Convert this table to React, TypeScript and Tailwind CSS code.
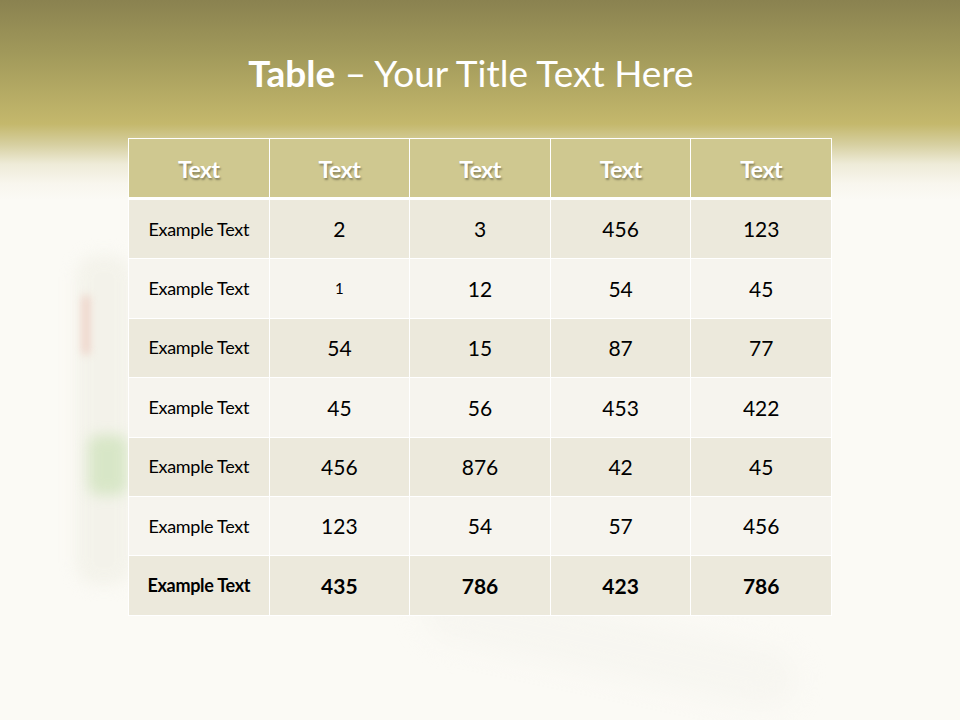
import React from "react";

const rows: { label: string; vals: string[]; bold?: boolean; small?: number[] }[] = [
  { label: "Example Text", vals: ["2", "3", "456", "123"] },
  { label: "Example Text", vals: ["1", "12", "54", "45"], small: [0] },
  { label: "Example Text", vals: ["54", "15", "87", "77"] },
  { label: "Example Text", vals: ["45", "56", "453", "422"] },
  { label: "Example Text", vals: ["456", "876", "42", "45"] },
  { label: "Example Text", vals: ["123", "54", "57", "456"] },
  { label: "Example Text", vals: ["435", "786", "423", "786"], bold: true },
];

export default function App() {
  return (
    <div
      className="relative w-[960px] h-[720px] overflow-hidden bg-[#fbfaf5]"
      style={{ fontFamily: "Lato, 'Liberation Sans', sans-serif" }}
    >
      <div className="absolute inset-x-0 top-0 h-[200px] bg-[linear-gradient(to_bottom,#8a8250_0%,#a49c5c_30%,#c4b86c_62%,#d6cf9f_72%,#eeebd8_82%,#f8f6ee_92%,#fbfaf5_100%)]" />
      {/* decorative blurred object */}
      <div className="absolute left-[76px] top-[255px] w-[56px] h-[330px] rounded-[20px] bg-[#f2f1e8] opacity-80 blur-[8px]" />
      <div className="absolute left-[82px] top-[295px] w-[8px] h-[60px] rounded-full bg-[#e9b0a2] opacity-50 blur-[4px]" />
      <div className="absolute left-[88px] top-[435px] w-[40px] h-[60px] rounded-[10px] bg-[#c6dfb0] opacity-60 blur-[7px]" />
      <div className="absolute left-[420px] top-[615px] w-[380px] h-[60px] rounded-full bg-[#f3f2ec] opacity-50 blur-[14px] rotate-[12deg]" />

      <div className="relative flex flex-col items-center">
        <h1 className="mt-[50px] h-[46px] pr-[18px] text-[37px] leading-[46px] text-white whitespace-nowrap">
          <span className="font-bold">Table</span> – Your Title Text Here
        </h1>

        <div className="mt-[42px] w-[704px] bg-white p-px flex flex-col">
          <div className="grid grid-cols-5 gap-px h-[58px]">
            {Array.from({ length: 5 }).map((_, i) => (
              <div
                key={i}
                className="bg-[#cfc890] flex items-center justify-center pt-[3px] text-white font-bold text-[23px] tracking-[-0.5px] [text-shadow:1px_2px_2px_rgba(0,0,0,0.35)]"
              >
                Text
              </div>
            ))}
          </div>
          <div className="h-[3px]" />
          <div className="flex flex-col gap-px">
            {rows.map((r, ri) => (
              <div key={ri} className="grid grid-cols-5 gap-px h-[58.4px]">
                <div
                  className={`${ri % 2 === 0 ? "bg-[#ece9dc]" : "bg-[#f6f4ee]"} flex items-center justify-center text-[18px] tracking-[-0.3px] text-black ${r.bold ? "font-bold" : ""}`}
                >
                  {r.label}
                </div>
                {r.vals.map((v, vi) => (
                  <div
                    key={vi}
                    className={`${ri % 2 === 0 ? "bg-[#ece9dc]" : "bg-[#f6f4ee]"} flex items-center justify-center text-black ${r.small?.includes(vi) ? "text-[15px]" : "text-[21px]"} ${r.bold ? "font-bold" : ""}`}
                  >
                    {v}
                  </div>
                ))}
              </div>
            ))}
          </div>
        </div>
      </div>
    </div>
  );
}
